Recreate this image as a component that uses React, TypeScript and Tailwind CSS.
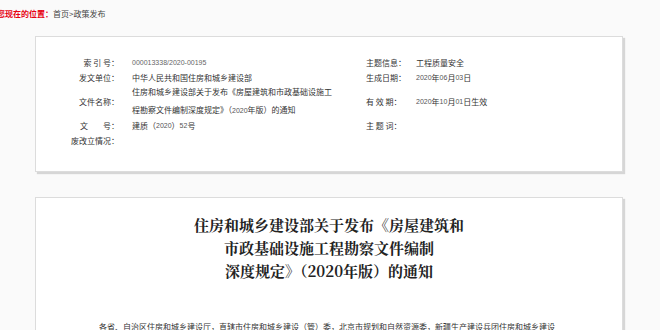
import React from 'react';

const cjk = "font-['Noto_Sans_CJK_SC','Noto_Sans',sans-serif]";

const Label: React.FC<{ children: React.ReactNode; align?: 'right' | 'left' }> = ({ children, align = 'right' }) => (
  <div className={`flex items-center whitespace-pre ${align === 'right' ? 'justify-end' : 'justify-start'} text-[#333]`}>
    {children}
  </div>
);

export default function App() {
  return (
    <div className={`min-h-screen w-[660px] h-[330px] overflow-hidden bg-[#fafafa] ${cjk} text-[8px] leading-[15px]`}>
      {/* 当前位置 */}
      <div className="h-[36px] pt-[5px] flex items-start">
        <div className="h-[16px] flex items-center ml-[-3px]">
          <span className="text-[#e60012] font-bold">您现在的位置：</span>
          <span className="text-[#444]">首页&gt;政策发布</span>
        </div>
      </div>

      {/* 信息表 */}
      <div className="ml-[35px] w-[588px] bg-white border border-[#dcdcdc] shadow-[2px_2px_1px_#d6d6d6] pt-[18px] pb-[23px] pl-[29px]">
        <div className="grid grid-cols-[54px_247px_50px_150px] gap-x-0">
          <Label>索 引 号：</Label>
          <div className="pl-[13px] flex items-center h-[15px] text-[#666] font-['Liberation_Sans',sans-serif] text-[7px]">000013338/2020-00195</div>
          <Label align="left">主题信息：</Label>
          <div className="flex items-center text-[#333]">工程质量安全</div>

          <Label>发文单位：</Label>
          <div className="pl-[13px] flex items-center h-[15px] text-[#333]">中华人民共和国住房和城乡建设部</div>
          <Label align="left">生成日期：</Label>
          <div className="flex items-center text-[#333]">
            <span className="font-['Liberation_Sans',sans-serif] text-[7px] text-[#555]">2020</span>年
            <span className="font-['Liberation_Sans',sans-serif] text-[7px] text-[#555]">06</span>月
            <span className="font-['Liberation_Sans',sans-serif] text-[7px] text-[#555]">03</span>日
          </div>

          <Label>文件名称：</Label>
          <div className="pl-[13px] h-[33px] flex flex-col justify-center leading-[18px] text-[#333]">
            <span>住房和城乡建设部关于发布《房屋建筑和市政基础设施工</span>
            <span>
              程勘察文件编制深度规定》（<span className="font-['Liberation_Sans',sans-serif] text-[7px] text-[#555]">2020</span>年版）的通知
            </span>
          </div>
          <Label align="left">有 效 期：</Label>
          <div className="flex items-center text-[#333]">
            <span className="font-['Liberation_Sans',sans-serif] text-[7px] text-[#555]">2020</span>年
            <span className="font-['Liberation_Sans',sans-serif] text-[7px] text-[#555]">10</span>月
            <span className="font-['Liberation_Sans',sans-serif] text-[7px] text-[#555]">01</span>日生效
          </div>

          <Label>
            <span>文</span>
            <span className="w-[15px]" />
            <span>号：</span>
          </Label>
          <div className="pl-[13px] flex items-center h-[15px] text-[#333]">
            建质（<span className="font-['Liberation_Sans',sans-serif] text-[7px] text-[#555]">2020</span>）
            <span className="font-['Liberation_Sans',sans-serif] text-[7px] text-[#555]">52</span>号
          </div>
          <Label align="left">主 题 词：</Label>
          <div />

          <Label>废改立情况：</Label>
          <div className="h-[15px]" />
          <div />
          <div />
        </div>
      </div>

      {/* 正文 */}
      <div className="ml-[35px] mt-[25px] w-[588px] bg-white border border-[#dcdcdc] shadow-[2px_2px_1px_#d6d6d6] pt-[15px] pb-[20px]">
        <h1 className="text-center text-[15px] leading-[23px] font-bold text-[#222] font-['Noto_Serif_CJK_SC','Liberation_Serif','Noto_Sans_CJK_SC',serif]">
          住房和城乡建设部关于发布《房屋建筑和
          <br />
          市政基础设施工程勘察文件编制
          <br />
          深度规定》（2020年版）的通知
        </h1>
        <p className="mt-[37px] ml-[63px] w-[480px] text-[8px] leading-[16px] text-[#333] whitespace-nowrap overflow-hidden">
          各省、自治区住房和城乡建设厅，直辖市住房和城乡建设（管）委，北京市规划和自然资源委，新疆生产建设兵团住房和城乡建设
        </p>
        <p className="ml-[47px] w-[494px] text-[8px] leading-[16px] text-[#333]">
          局，有关单位：
        </p>
      </div>
    </div>
  );
}
